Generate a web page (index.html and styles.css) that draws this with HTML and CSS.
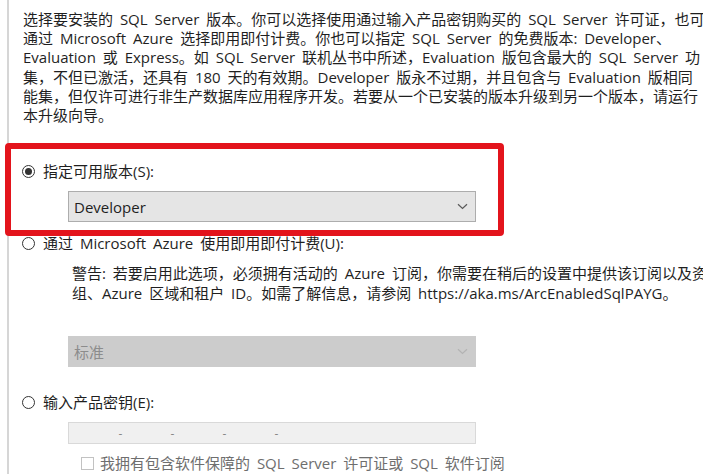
FILE: index.html
```html
<!DOCTYPE html>
<html lang="zh-CN">
<head>
<meta charset="utf-8">
<title>版本</title>
<link rel="stylesheet" href="styles.css">
</head>
<body>
<div class="panel">
  <div class="intro">
    <div class="line">选择要安装的 SQL Server 版本。你可以选择使用通过输入产品密钥购买的 SQL Server 许可证，也可</div>
    <div class="line">通过 Microsoft Azure 选择即用即付计费。你也可以指定 SQL Server 的免费版本: Developer、</div>
    <div class="line">Evaluation 或 Express。如 SQL Server 联机丛书中所述，Evaluation 版包含最大的 SQL Server 功</div>
    <div class="line">集，不但已激活，还具有 180 天的有效期。Developer 版永不过期，并且包含与 Evaluation 版相同</div>
    <div class="line">能集，但仅许可进行非生产数据库应用程序开发。若要从一个已安装的版本升级到另一个版本，请运行</div>
    <div class="line">本升级向导。</div>
  </div>

  <label class="option opt-first">
    <span class="radio checked"></span>
    <span class="opt-label">指定可用版本(S):</span>
  </label>
  <div class="select sel-first">
    <span class="sel-text">Developer</span>
    <svg class="chev" width="11" height="7" viewBox="0 0 11 7"><path d="M1 1.2 L5.5 5.5 L10 1.2" fill="none" stroke="#5a5a5a" stroke-width="1.2"/></svg>
  </div>

  <label class="option opt-second">
    <span class="radio"></span>
    <span class="opt-label">通过 Microsoft Azure 使用即用即付计费(U):</span>
  </label>
  <div class="warning">
    <div class="line">警告: 若要启用此选项，必须拥有活动的 Azure 订阅，你需要在稍后的设置中提供该订阅以及资</div>
    <div class="line">组、Azure 区域和租户 ID。如需了解信息，请参阅 https://aka.ms/ArcEnabledSqlPAYG。</div>
  </div>
  <div class="select sel-disabled">
    <span class="sel-text">标准</span>
    <svg class="chev" width="11" height="7" viewBox="0 0 11 7"><path d="M1 1.2 L5.5 5.5 L10 1.2" fill="none" stroke="#b3b3b3" stroke-width="1.2"/></svg>
  </div>

  <label class="option opt-third">
    <span class="radio"></span>
    <span class="opt-label">输入产品密钥(E):</span>
  </label>
  <div class="keybox">
    <span class="dash">-</span><span class="dash">-</span><span class="dash">-</span><span class="dash">-</span>
  </div>
  <label class="check-row">
    <span class="checkbox"></span>
    <span class="check-label">我拥有包含软件保障的 SQL Server 许可证或 SQL 软件订阅</span>
  </label>
</div>
<div class="highlight"></div>
</body>
</html>
```
FILE: styles.css
```css
html, body {
  margin: 0;
  padding: 0;
  background: #ffffff;
  overflow: hidden;
}
body {
  width: 703px;
  height: 474px;
  position: relative;
  font-family: "Open Sans", "Noto Sans CJK SC", sans-serif;
  font-size: 15px;
  word-spacing: 3px;
  color: #1f1f1f;
}
.panel {
  margin-left: 7px;
  border-left: 2px solid #d6d6d6;
  padding-left: 13px;
  padding-top: 10px;
  height: 474px;
  box-sizing: border-box;
}
.line {
  white-space: nowrap;
}
.intro {
  padding-left: 1px;
  line-height: 19.2px;
}
.option {
  display: flex;
  align-items: center;
  height: 20px;
  gap: 8px;
  line-height: 20px;
}
.opt-first { margin-top: 36px; }
.opt-second { margin-top: 11px; }
.opt-third { margin-top: 25px; }
.radio {
  width: 13px;
  height: 13px;
  box-sizing: border-box;
  border: 1px solid #333;
  border-radius: 50%;
  background: #fff;
  display: flex;
  align-items: center;
  justify-content: center;
  flex: none;
}
.radio.checked::after {
  content: "";
  width: 7px;
  height: 7px;
  border-radius: 50%;
  background: #333;
}
.opt-label {
  white-space: nowrap;
}
.select {
  margin-left: 46px;
  width: 408px;
  height: 31px;
  box-sizing: border-box;
  display: flex;
  align-items: center;
  justify-content: space-between;
  padding: 0 7px 0 5px;
  line-height: 20px;
}
.sel-first {
  margin-top: 10px;
  background: #e5e5e5;
  border: 1px solid #adadad;
}
.sel-disabled {
  margin-top: 33px;
  background: #cccccc;
  border: 1px solid #cccccc;
  color: #8c8c8c;
}
.chev { flex: none; }
.warning {
  margin-top: 10px;
  margin-left: 50px;
  line-height: 20px;
}
.keybox {
  margin-top: 10px;
  margin-left: 46px;
  width: 408px;
  height: 22px;
  box-sizing: border-box;
  background: #f0f0f0;
  border: 1px solid #d9d9d9;
  display: flex;
  align-items: center;
  padding-left: 49px;
  gap: 47px;
  color: #888;
  font-size: 12px;
  word-spacing: 0;
}
.dash { width: 5px; text-align: center; }
.check-row {
  margin-top: 9px;
  margin-left: 59px;
  display: flex;
  align-items: center;
  height: 20px;
  gap: 6px;
  line-height: 20px;
}
.checkbox {
  width: 13px;
  height: 13px;
  box-sizing: border-box;
  border: 1px solid #c2c2c2;
  background: #fff;
  flex: none;
}
.check-label {
  color: #6e6e6e;
  white-space: nowrap;
}
.highlight {
  position: absolute;
  left: 5px;
  top: 143px;
  width: 499px;
  height: 93px;
  box-sizing: border-box;
  border: 6px solid #e3141c;
  border-radius: 4px;
  pointer-events: none;
}
```
